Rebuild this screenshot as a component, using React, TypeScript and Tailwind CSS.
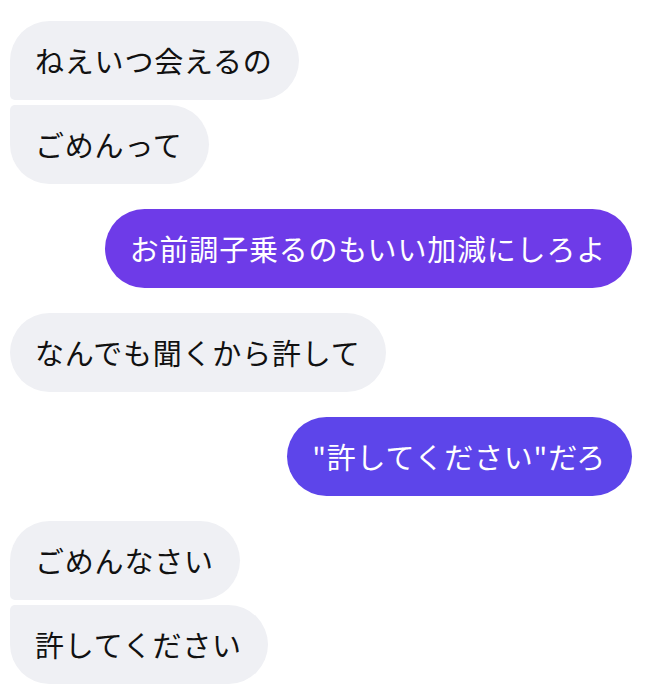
import React from "react";

type Msg = { text: string; side: "l" | "r"; shape: string; bg?: string; mt: string };

const msgs: Msg[] = [
  { text: "ねえいつ会えるの", side: "l", shape: "rounded-[40px] rounded-bl-[5px]", mt: "mt-0" },
  { text: "ごめんって", side: "l", shape: "rounded-[40px] rounded-tl-[5px]", mt: "mt-[5px]" },
  { text: "お前調子乗るのもいい加減にしろよ", side: "r", shape: "rounded-[40px]", bg: "bg-[#6e3be8]", mt: "mt-[25px]" },
  { text: "なんでも聞くから許して", side: "l", shape: "rounded-[40px]", mt: "mt-[25px]" },
  { text: "\"許してください\"だろ", side: "r", shape: "rounded-[40px]", bg: "bg-[#5d45ea]", mt: "mt-[25px]" },
  { text: "ごめんなさい", side: "l", shape: "rounded-[40px] rounded-bl-[5px]", mt: "mt-[25px]" },
  { text: "許してください", side: "l", shape: "rounded-[40px] rounded-tl-[5px]", mt: "mt-[5px]" },
];

export default function App() {
  return (
    <div
      className="w-[648px] h-[690px] bg-white flex flex-col pt-[21px] pl-[10px] pr-[16px] overflow-hidden"
      style={{ fontFamily: '"Noto Sans CJK JP", "Noto Sans", sans-serif' }}
    >
      {msgs.map((m, i) => (
        <div key={i} className={`flex ${m.side === "l" ? "justify-start" : "justify-end"} ${m.mt}`}>
          <div
            className={`h-[79px] flex items-center pl-[25px] pr-[26px] text-[29px] tracking-[0.8px] leading-none whitespace-nowrap ${m.shape} ${
              m.side === "l" ? "bg-[#eff0f4] text-[#111111]" : `${m.bg} text-white`
            }`}
          >
            {m.text}
          </div>
        </div>
      ))}
    </div>
  );
}
